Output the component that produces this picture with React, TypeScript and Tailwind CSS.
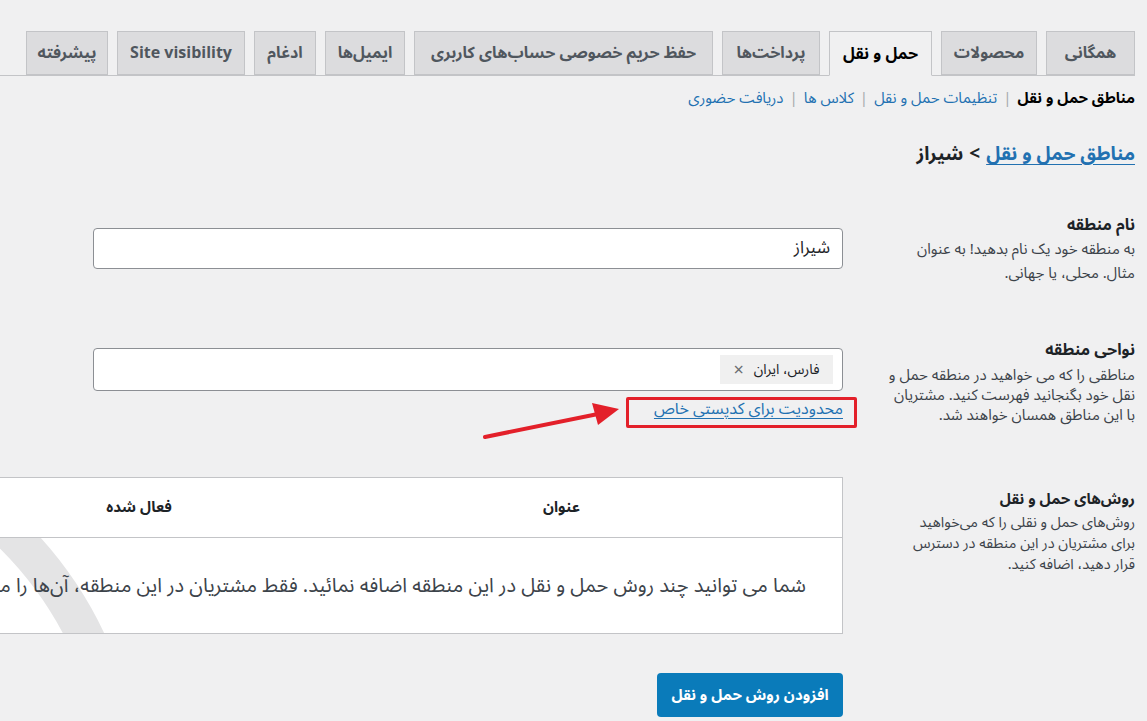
const tabs = [
  { label: "همگانی", w: "w-[89px]" },
  { label: "محصولات", w: "w-[96px]" },
  { label: "حمل و نقل", w: "w-[103px]", active: true },
  { label: "پرداخت‌ها", w: "w-[98px]" },
  { label: "حفظ حریم خصوصی حساب‌های کاربری", w: "w-[299px]" },
  { label: "ایمیل‌ها", w: "w-[80px]" },
  { label: "ادغام", w: "w-[62px]" },
  { label: "Site visibility", w: "w-[128px]" },
  { label: "پیشرفته", w: "w-[82px]" },
];

const App = () => {
  return (
    <div
      dir="rtl"
      className="relative w-[1147px] h-[721px] overflow-hidden bg-[#f0f0f1] text-[#1d2327] font-['Noto_Sans_Arabic','DejaVu_Sans',sans-serif]"
    >
      <div className="pr-[12px] pt-[31px]">
        {/* tabs */}
        <nav className="flex gap-[9px] border-b border-[#c3c4c7] h-[45px]">
          {tabs.map((t) => (
            <div
              key={t.label}
              className={
                t.active
                  ? `${t.w} shrink-0 h-[45px] flex items-center justify-center border border-[#c3c4c7] border-b-[#f0f0f1] bg-[#f0f0f1] text-[16px] font-bold text-black`
                  : `${t.w} shrink-0 h-[44px] flex items-center justify-center border border-[#c3c4c7] bg-[#dcdcde] text-[16px] font-bold text-[#50575e]`
              }
            >
              {t.label}
            </div>
          ))}
        </nav>

        {/* sub nav */}
        <div className="mt-[11px] flex items-center gap-[6px] text-[15px] leading-[22px]">
          <span className="font-bold text-black">مناطق حمل و نقل</span>
          <span className="text-[#a7aaad]">|</span>
          <span className="text-[#2271b1]">تنظیمات حمل و نقل</span>
          <span className="text-[#a7aaad]">|</span>
          <span className="text-[#2271b1]">کلاس ها</span>
          <span className="text-[#a7aaad]">|</span>
          <span className="text-[#2271b1]">دریافت حضوری</span>
        </div>

        {/* heading */}
        <h1 className="mt-[30px] text-[19px] leading-[30px] font-bold">
          <span className="text-[#2271b1] underline underline-offset-4">مناطق حمل و نقل</span>
          <span className="mx-[6px]">&gt;</span>
          <span>شیراز</span>
        </h1>

        {/* row 1 */}
        <div className="mt-[44px] flex">
          <div className="w-[292px] shrink-0">
            <div className="text-[16px] leading-[24px] font-bold">نام منطقه</div>
            <div className="text-[15px] leading-[24px] text-[#3c434a]">
              به منطقه خود یک نام بدهید! به عنوان
              <br />
              مثال. محلی، یا جهانی.
            </div>
          </div>
          <div className="pt-[15px]">
            <div className="w-[750px] h-[41px] bg-white border border-[#8c8f94] rounded-[4px] flex items-center px-[12px] text-[17px]">
              شیراز
            </div>
          </div>
        </div>

        {/* row 2 */}
        <div className="mt-[53px] flex">
          <div className="w-[292px] shrink-0">
            <div className="text-[16px] leading-[24px] font-bold">نواحی منطقه</div>
            <div className="mt-[3px] text-[15px] leading-[20px] text-[#3c434a]">
              مناطقی را که می خواهید در منطقه حمل و
              <br />
              نقل خود بگنجانید فهرست کنید. مشتریان
              <br />
              با این مناطق همسان خواهند شد.
            </div>
          </div>
          <div className="pt-[10px]">
            <div className="w-[750px] h-[43px] bg-white border border-[#8c8f94] rounded-[4px] flex items-center px-[9px]">
              <div className="h-[29px] w-[113px] bg-[#f0f0f0] flex items-center justify-center gap-[10px] text-[14px]">
                <span>فارس، ایران</span>
                <span className="text-[#6b6e72] text-[18px] leading-none">×</span>
              </div>
            </div>
            <div className="mt-[6px] text-[16px] leading-[24px] text-[#2271b1] underline underline-offset-4">
              محدودیت برای کدپستی خاص
            </div>
          </div>
        </div>

        {/* row 3 */}
        <div className="mt-[52px] flex">
          <div className="w-[292px] shrink-0 pt-[10px]">
            <div className="text-[15px] leading-[24px] font-bold">روش‌های حمل و نقل</div>
            <div className="mt-[1px] text-[14.5px] leading-[21px] text-[#3c434a]">
              روش‌های حمل و نقلی را که می‌خواهید
              <br />
              برای مشتریان در این منطقه در دسترس
              <br />
              قرار دهید، اضافه کنید.
            </div>
          </div>
          <div className="shrink-0">
            <div className="w-[900px] bg-white border border-[#c3c4c7]">
              <div className="flex h-[60px] border-b border-[#c3c4c7] text-[15px] font-bold">
                <div className="w-[561px] flex items-center justify-center">عنوان</div>
                <div className="w-[284px] flex items-center justify-center">فعال شده</div>
              </div>
              <div className="relative h-[95px] overflow-hidden">
                <svg
                  className="absolute right-[722px] top-0"
                  width="120"
                  height="95"
                  viewBox="0 0 120 95"
                >
                  <circle cx="-250" cy="262" r="373" fill="none" stroke="#e4e4e5" strokeWidth="37" />
                </svg>
                <div className="relative h-full flex items-center pr-[36px] whitespace-nowrap text-[20px] text-[#3c434a]">
                  شما می توانید چند روش حمل و نقل در این منطقه اضافه نمائید. فقط مشتریان در این منطقه، آن‌ها را مشاهده خواهند کرد.
                </div>
              </div>
            </div>
            <button className="mt-[39px] h-[44px] w-[186px] rounded-[4px] bg-[#0a7bba] text-white text-[15px] font-bold">
              افزودن روش حمل و نقل
            </button>
          </div>
        </div>
      </div>

      {/* annotation */}
      <div className="absolute left-[626px] top-[397px] w-[231px] h-[31px] border-[3px] border-[#e3202a] rounded-[2px]" />
      <svg className="absolute left-0 top-0" width="1147" height="721" viewBox="0 0 1147 721">
        <line x1="485" y1="437" x2="598" y2="414" stroke="#e3202a" strokeWidth="4" strokeLinecap="round" />
        <polygon points="619,409 592,403 598,425" fill="#e3202a" />
      </svg>
    </div>
  );
};

export default App;
